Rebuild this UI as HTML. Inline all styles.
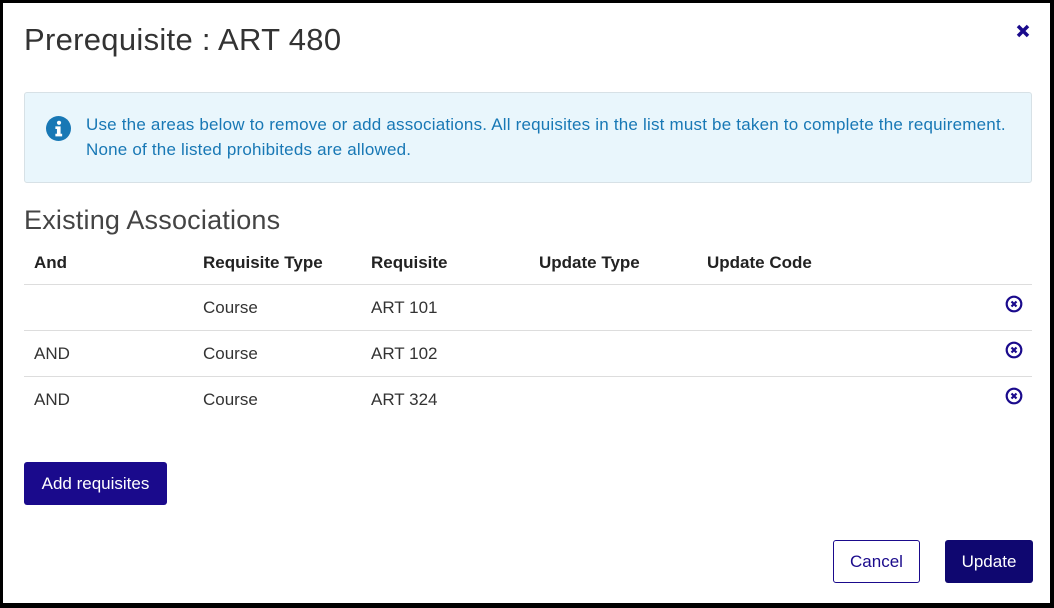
<!DOCTYPE html>
<html><head><style>
body{margin:0;background:#000;width:1054px;height:608px;overflow:hidden;font-family:"Liberation Sans",sans-serif;}
.m{position:absolute;left:3px;top:3px;width:1047px;height:600px;background:#fff;}
.a{position:absolute;}
h1{position:absolute;left:21px;top:19px;margin:0;font-weight:normal;font-size:31px;color:#333;letter-spacing:0.3px}
.info{position:absolute;left:21px;top:89px;width:1006px;height:89px;background:#e9f6fc;border:1px solid #d7e1e6;border-radius:3px;}
.info p{position:absolute;left:61px;top:19px;margin:0;color:#1878b5;font-size:17px;line-height:25px;letter-spacing:0.2px;white-space:nowrap}
.th{font-weight:bold;font-size:17px;color:#222;top:250px}
.td{font-size:17px;color:#333}
.line{position:absolute;left:21px;width:1008px;height:1px;background:#ddd}
.btn{position:absolute;border-radius:3px;font-size:17px;text-align:center;box-sizing:border-box}
</style></head><body><div class="m">
<h1>Prerequisite : ART 480</h1>
<svg class="a" style="left:1013px;top:21px" width="14" height="14" viewBox="0 0 14 14"><path d="M2 2L12 12M12 2L2 12" stroke="#1a0a8c" stroke-width="3.5"/></svg>
<div class="info">
<svg class="a" style="left:21px;top:23px" width="25" height="25" viewBox="0 0 24 24"><circle cx="12" cy="12" r="12" fill="#1878b5"/><circle cx="12.5" cy="6.5" r="2" fill="#fff"/><path d="M9 10h5v7h1.5v2.5h-6.5v-2.5h1.5v-4.5h-1.5z" fill="#fff"/></svg>
<p>Use the areas below to remove or add associations. All requisites in the list must be taken to complete the requirement.<br>None of the listed prohibiteds are allowed.</p></div>
<div class="a" style="left:21px;top:202px;font-size:27px;color:#444;letter-spacing:0.2px">Existing Associations</div>
<div class="a th" style="left:31px">And</div><div class="a th" style="left:200px">Requisite Type</div><div class="a th" style="left:368px">Requisite</div><div class="a th" style="left:536px">Update Type</div><div class="a th" style="left:704px">Update Code</div>
<div class="line" style="top:281px"></div><div class="line" style="top:327px"></div><div class="line" style="top:373px"></div>
<div class="a td" style="left:200px;top:295px">Course</div><div class="a td" style="left:368px;top:295px">ART 101</div>
<div class="a td" style="left:31px;top:341px">AND</div><div class="a td" style="left:200px;top:341px">Course</div><div class="a td" style="left:368px;top:341px">ART 102</div>
<div class="a td" style="left:31px;top:387px">AND</div><div class="a td" style="left:200px;top:387px">Course</div><div class="a td" style="left:368px;top:387px">ART 324</div>
<svg class="a" style="left:1002px;top:292px" width="18" height="18" viewBox="0 0 18 18"><circle cx="9" cy="9" r="7.3" fill="none" stroke="#1a0a8c" stroke-width="2.2"/><path d="M6.5 6.5l5 5M11.5 6.5l-5 5" stroke="#1a0a8c" stroke-width="2.2"/></svg>
<svg class="a" style="left:1002px;top:338px" width="18" height="18" viewBox="0 0 18 18"><circle cx="9" cy="9" r="7.3" fill="none" stroke="#1a0a8c" stroke-width="2.2"/><path d="M6.5 6.5l5 5M11.5 6.5l-5 5" stroke="#1a0a8c" stroke-width="2.2"/></svg>
<svg class="a" style="left:1002px;top:384px" width="18" height="18" viewBox="0 0 18 18"><circle cx="9" cy="9" r="7.3" fill="none" stroke="#1a0a8c" stroke-width="2.2"/><path d="M6.5 6.5l5 5M11.5 6.5l-5 5" stroke="#1a0a8c" stroke-width="2.2"/></svg>
<div class="btn" style="left:21px;top:459px;width:143px;height:43px;background:#1a0a8c;color:#fff;line-height:43px">Add requisites</div>
<div class="btn" style="left:830px;top:537px;width:87px;height:43px;border:1px solid #1a0a8c;color:#1a0a8c;line-height:41px">Cancel</div>
<div class="btn" style="left:942px;top:537px;width:88px;height:43px;background:#0f0770;color:#fff;line-height:43px">Update</div>
</div></body></html>
